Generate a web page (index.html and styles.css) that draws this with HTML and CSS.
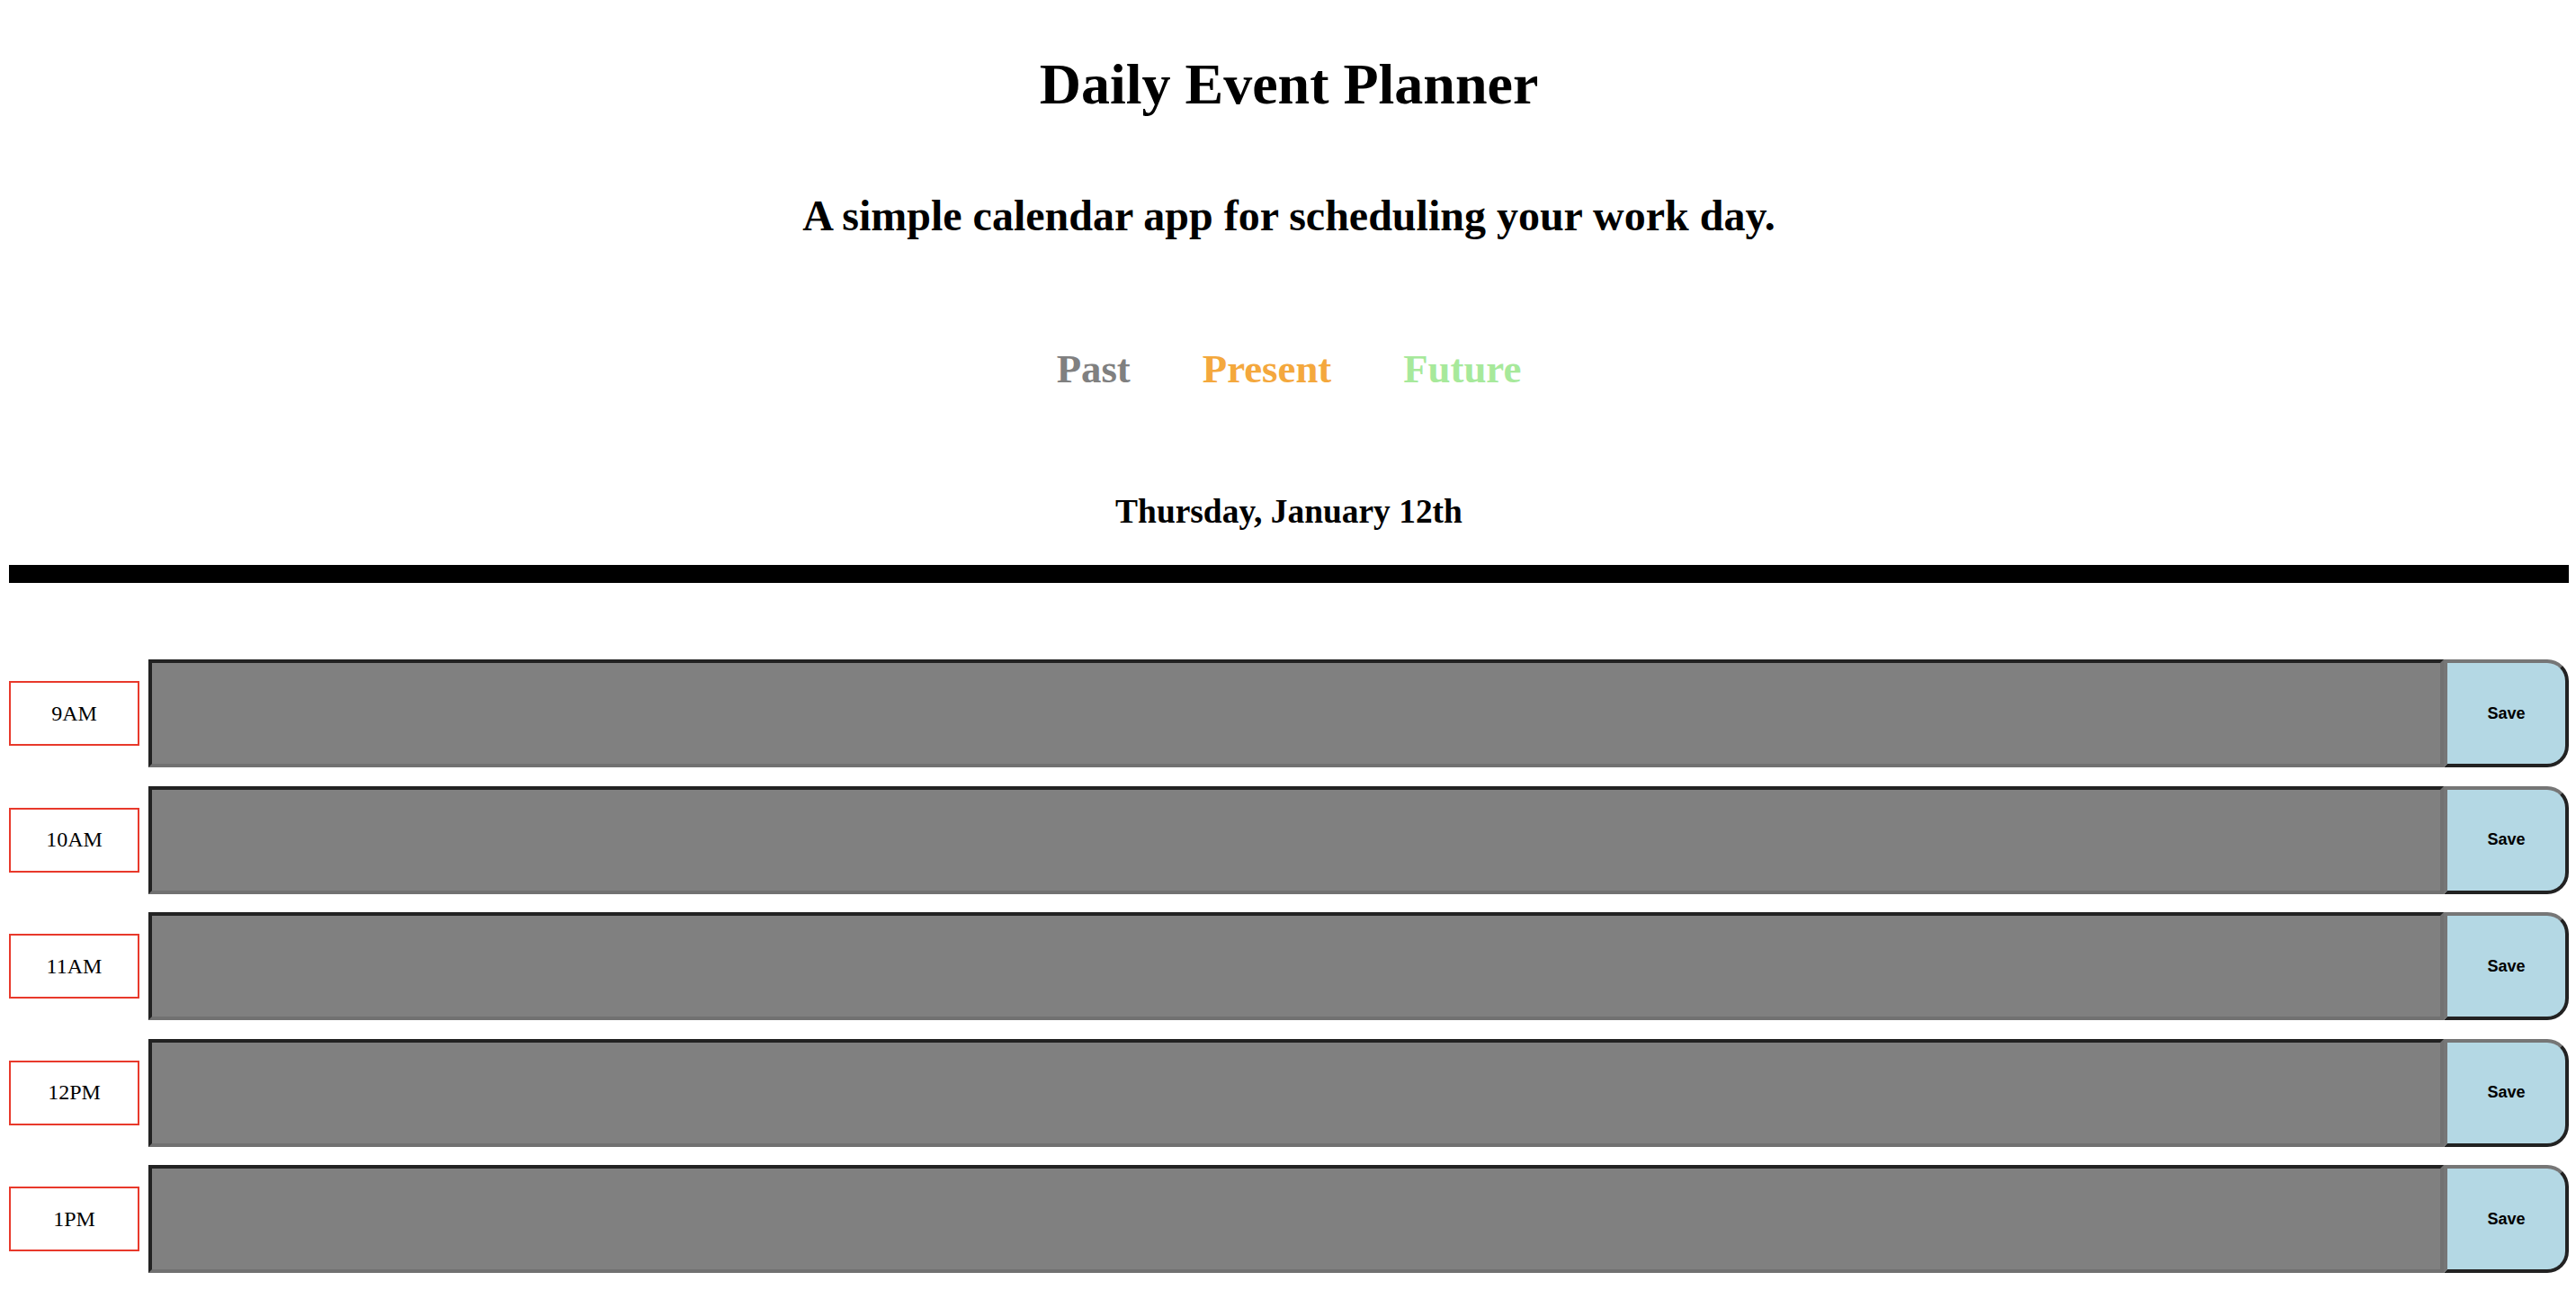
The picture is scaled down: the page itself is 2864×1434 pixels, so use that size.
FILE: index.html
```html
<!DOCTYPE html>
<html lang="en">
<head>
<meta charset="utf-8">
<title>Daily Event Planner</title>
<link rel="stylesheet" href="styles.css">
</head>
<body>
<header class="jumbotron">
  <h1 class="display-title">Daily Event Planner</h1>
  <p class="lead">A simple calendar app for scheduling your work day.</p>
  <div class="legend">
    <span class="legend-item legend-past">Past</span>
    <span class="legend-item legend-present">Present</span>
    <span class="legend-item legend-future">Future</span>
  </div>
  <p class="current-day">Thursday, January 12th</p>
  <hr class="divider">
</header>
<main class="container">
  <div class="time-block">
    <div class="hour">9AM</div>
    <textarea class="description past"></textarea>
    <button class="save-btn">Save</button>
  </div>
  <div class="time-block">
    <div class="hour">10AM</div>
    <textarea class="description past"></textarea>
    <button class="save-btn">Save</button>
  </div>
  <div class="time-block">
    <div class="hour">11AM</div>
    <textarea class="description past"></textarea>
    <button class="save-btn">Save</button>
  </div>
  <div class="time-block">
    <div class="hour">12PM</div>
    <textarea class="description past"></textarea>
    <button class="save-btn">Save</button>
  </div>
  <div class="time-block">
    <div class="hour">1PM</div>
    <textarea class="description past"></textarea>
    <button class="save-btn">Save</button>
  </div>
  <div class="time-block">
    <div class="hour">2PM</div>
    <textarea class="description past"></textarea>
    <button class="save-btn">Save</button>
  </div>
  <div class="time-block">
    <div class="hour">3PM</div>
    <textarea class="description past"></textarea>
    <button class="save-btn">Save</button>
  </div>
  <div class="time-block">
    <div class="hour">4PM</div>
    <textarea class="description past"></textarea>
    <button class="save-btn">Save</button>
  </div>
  <div class="time-block">
    <div class="hour">5PM</div>
    <textarea class="description past"></textarea>
    <button class="save-btn">Save</button>
  </div>
</main>
</body>
</html>
```
FILE: styles.css
```css
html, body {
  margin: 0;
  padding: 0;
  background: #ffffff;
}

body {
  font-family: "Liberation Serif", "Times New Roman", serif;
  color: #000;
  padding: 0 8px 0 10px;
}

body::after {
  content: "";
  position: fixed;
  left: 0;
  right: 0;
  bottom: 0;
  height: 44px;
  background: linear-gradient(to bottom, rgba(0,0,0,0) 0%, rgba(0,0,0,0.045) 100%);
  pointer-events: none;
  z-index: -1;
}

.jumbotron {
  text-align: center;
  display: flow-root;
}

.display-title {
  font-size: 64px;
  line-height: 64px;
  font-weight: bold;
  margin: 62px 0 0;
}

.lead {
  font-size: 48px;
  line-height: 48px;
  font-weight: bold;
  margin: 90px 0 0;
}

.legend {
  display: flex;
  justify-content: center;
  gap: 80px;
  margin-top: 124px;
}

.legend-item {
  font-size: 44.8px;
  line-height: 45px;
  font-weight: bold;
}

.legend-past { color: #808080; }
.legend-present { color: #f4a83d; }
.legend-future { color: #a7e99b; }

.current-day {
  font-size: 37.44px;
  line-height: 38px;
  font-weight: bold;
  margin: 117px 0 0;
}

.divider {
  margin: 40px 0 0;
  height: 20px;
  border: 0;
  background: #000;
}

.container {
  display: flex;
  flex-direction: column;
  gap: 20.5px;
  padding-top: 85px;
}

.time-block {
  display: flex;
  align-items: center;
}

.hour {
  box-sizing: border-box;
  width: 145px;
  height: 72px;
  border: 2px solid #e8392b;
  display: flex;
  align-items: center;
  justify-content: center;
  font-size: 24px;
  margin-right: 10px;
}

.description {
  box-sizing: border-box;
  flex: 1;
  height: 120px;
  margin: 0;
  resize: none;
  background: #808080;
  border-style: solid;
  border-width: 4px;
  border-color: #222222 #717171 #717171 #222222;
  padding: 0;
  outline: none;
}

.save-btn {
  box-sizing: border-box;
  width: 139px;
  height: 120px;
  margin: 0;
  background: #b4d8e4;
  border-style: solid;
  border-width: 4px;
  border-color: #767676 #222222 #222222 #767676;
  border-radius: 0 24px 24px 0;
  font-family: "Liberation Sans", Arial, sans-serif;
  font-weight: bold;
  font-size: 18px;
  color: #000;
  padding: 0;
}
```
